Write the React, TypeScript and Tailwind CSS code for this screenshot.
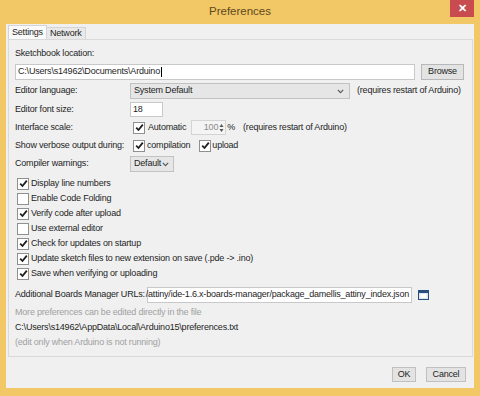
import React from "react";

const FONT = { fontFamily: '"Liberation Sans", Arial, sans-serif' };

function Check({ checked }: { checked: boolean }) {
  return (
    <span className="w-[12px] h-[12px] bg-white border border-[#909090] flex items-center justify-center shrink-0">
      {checked && (
        <svg width="9" height="9" viewBox="0 0 9 9">
          <path d="M1.2 4.6 L3.5 7 L7.8 1.6" stroke="#1e1e1e" strokeWidth="1.8" fill="none" />
        </svg>
      )}
    </span>
  );
}

function Chevron() {
  return (
    <svg width="7" height="5" viewBox="0 0 7 5" className="shrink-0">
      <path d="M0.8 0.8 L3.5 3.6 L6.2 0.8" stroke="#555" strokeWidth="1.1" fill="none" />
    </svg>
  );
}

function Row({ label, children, h = "h-[15px]", mt = "mt-[3px]" }: { label: string; children?: React.ReactNode; h?: string; mt?: string }) {
  return (
    <div className={`flex items-center ${h} ${mt}`}>
      <div className="w-[115px] shrink-0 whitespace-nowrap">{label}</div>
      {children}
    </div>
  );
}

export default function App() {
  const checks: [string, boolean][] = [
    ["Display line numbers", true],
    ["Enable Code Folding", false],
    ["Verify code after upload", true],
    ["Use external editor", false],
    ["Check for updates on startup", true],
    ["Update sketch files to new extension on save (.pde -> .ino)", true],
    ["Save when verifying or uploading", true],
  ];
  return (
    <div
      className="w-[480px] h-[396px] bg-[#f2c765] relative flex flex-col text-[9px] tracking-[-0.2px] text-[#1e1e1e] overflow-hidden"
      style={FONT}
    >
      <div className="h-[24px] shrink-0 flex items-center justify-center text-[11.5px] tracking-[0px] text-[color:#5e4a1e]">
        Preferences
      </div>
      <div className="absolute right-[6px] top-0 w-[24px] h-[17px] bg-[#c84c4f] flex items-center justify-center text-white text-[11px] font-bold">
        ✕
      </div>
      <div className="flex-1 mx-[6px] mb-[8px] bg-[#f0f0f0] flex flex-col pl-[2px] pr-[1px]">
        {/* tabs */}
        <div className="h-[15px] shrink-0 flex items-end">
          <div className="h-[14px] px-[3px] bg-[#fafafa] border border-b-0 border-[#d4d4d4] flex items-center">Settings</div>
          <div className="h-[12px] px-[3px] bg-[#e9e9e9] border border-b-0 border-l-0 border-[#d4d4d4] flex items-center">Network</div>
        </div>
        {/* panel */}
        <div className="h-[318px] shrink-0 border border-[#d9d9d9] bg-[#f0f0f0] pl-[6px] flex flex-col">
          <div className="h-[14px] mt-[7px] flex items-center">Sketchbook location:</div>
          <div className="h-[16px] mt-[3px] flex items-center gap-[6px]">
            <div className="w-[400px] h-[16px] bg-white border border-[#c8c8c8] flex items-center pl-[2px]">
              C:\Users\s14962\Documents\Arduino<span className="w-px h-[10px] bg-black ml-px" />
            </div>
            <div className="w-[43px] h-[16px] bg-[#e3e3e3] border border-[#b8b8b8] flex items-center justify-center">Browse</div>
          </div>
          <Row label="Editor language:" h="h-[16px]">
            <div className="w-[220px] h-[16px] bg-[#e6e6e6] border border-[#c2c2c2] flex items-center justify-between pl-[3px] pr-[5px]">
              <span>System Default</span>
              <Chevron />
            </div>
            <span className="ml-[7px] whitespace-nowrap">(requires restart of Arduino)</span>
          </Row>
          <Row label="Editor font size:">
            <div className="w-[33px] h-[15px] bg-white border border-[#c8c8c8] flex items-center pl-[2px]">18</div>
          </Row>
          <Row label="Interface scale:">
            <span className="ml-[3px]"><Check checked /></span>
            <span className="ml-[3px]">Automatic</span>
            <div className="ml-[5px] w-[35px] h-[15px] bg-[#f4f4f4] border border-[#d4d4d4] flex items-center justify-end pr-[1px] text-[#8c8c8c]">
              <span>100</span>
              <svg width="5" height="10" viewBox="0 0 5 10" className="ml-[1px]">
                <path d="M0.5 4 L2.5 1 L4.5 4 Z" fill="#555" />
                <path d="M0.5 6 L2.5 9 L4.5 6 Z" fill="#555" />
              </svg>
            </div>
            <span className="ml-[1px]">%</span>
            <span className="ml-[8px] whitespace-nowrap">(requires restart of Arduino)</span>
          </Row>
          <Row label="Show verbose output during:">
            <span className="ml-[3px]"><Check checked /></span>
            <span className="ml-[2px]">compilation</span>
            <span className="ml-[9px]"><Check checked /></span>
            <span className="ml-[1px]">upload</span>
          </Row>
          <Row label="Compiler warnings:" h="h-[16px]">
            <div className="w-[44px] h-[16px] bg-[#e6e6e6] border border-[#c2c2c2] flex items-center justify-between pl-[3px] pr-[4px]">
              <span>Default</span>
              <Chevron />
            </div>
          </Row>
          <div className="mt-[4px] flex flex-col pl-[2px]">
            {checks.map(([t, c]) => (
              <div key={t} className="h-[15px] flex items-center gap-[2px] whitespace-nowrap">
                <Check checked={c} />
                <span>{t}</span>
              </div>
            ))}
          </div>
          <div className="h-[16px] mt-[6px] flex items-center">
            <div className="w-[132px] shrink-0 whitespace-nowrap">Additional Boards Manager URLs:</div>
            <div className="w-[265px] h-[16px] bg-white border border-[#c8c8c8] flex items-center justify-end pr-[2px] whitespace-nowrap">
              <span>/attiny/ide-1.6.x-boards-manager/package_damellis_attiny_index.json</span>
            </div>
            <svg width="11" height="10" viewBox="0 0 11 10" className="ml-[6px]">
              <rect x="0.5" y="0.5" width="10" height="9" fill="#dfe6f0" stroke="#2a4d80" />
              <rect x="1" y="1" width="9" height="2" fill="#2a4d80" />
              <rect x="2.5" y="4" width="6" height="4" fill="#ffffff" />
            </svg>
          </div>
          <div className="h-[15px] mt-[2px] flex items-center text-[#a0a0a0]">More preferences can be edited directly in the file</div>
          <div className="h-[15px] flex items-center">C:\Users\s14962\AppData\Local\Arduino15\preferences.txt</div>
          <div className="h-[15px] flex items-center text-[#a0a0a0]">(edit only when Arduino is not running)</div>
        </div>
        {/* footer */}
        <div className="flex-1 flex justify-end items-start pt-[10px] pr-[7px] gap-[10px]">
          <div className="w-[24px] h-[15px] bg-[#e3e3e3] border border-[#c0c0c0] flex items-center justify-center">OK</div>
          <div className="w-[40px] h-[15px] bg-[#e3e3e3] border border-[#c0c0c0] flex items-center justify-center">Cancel</div>
        </div>
      </div>
    </div>
  );
}
